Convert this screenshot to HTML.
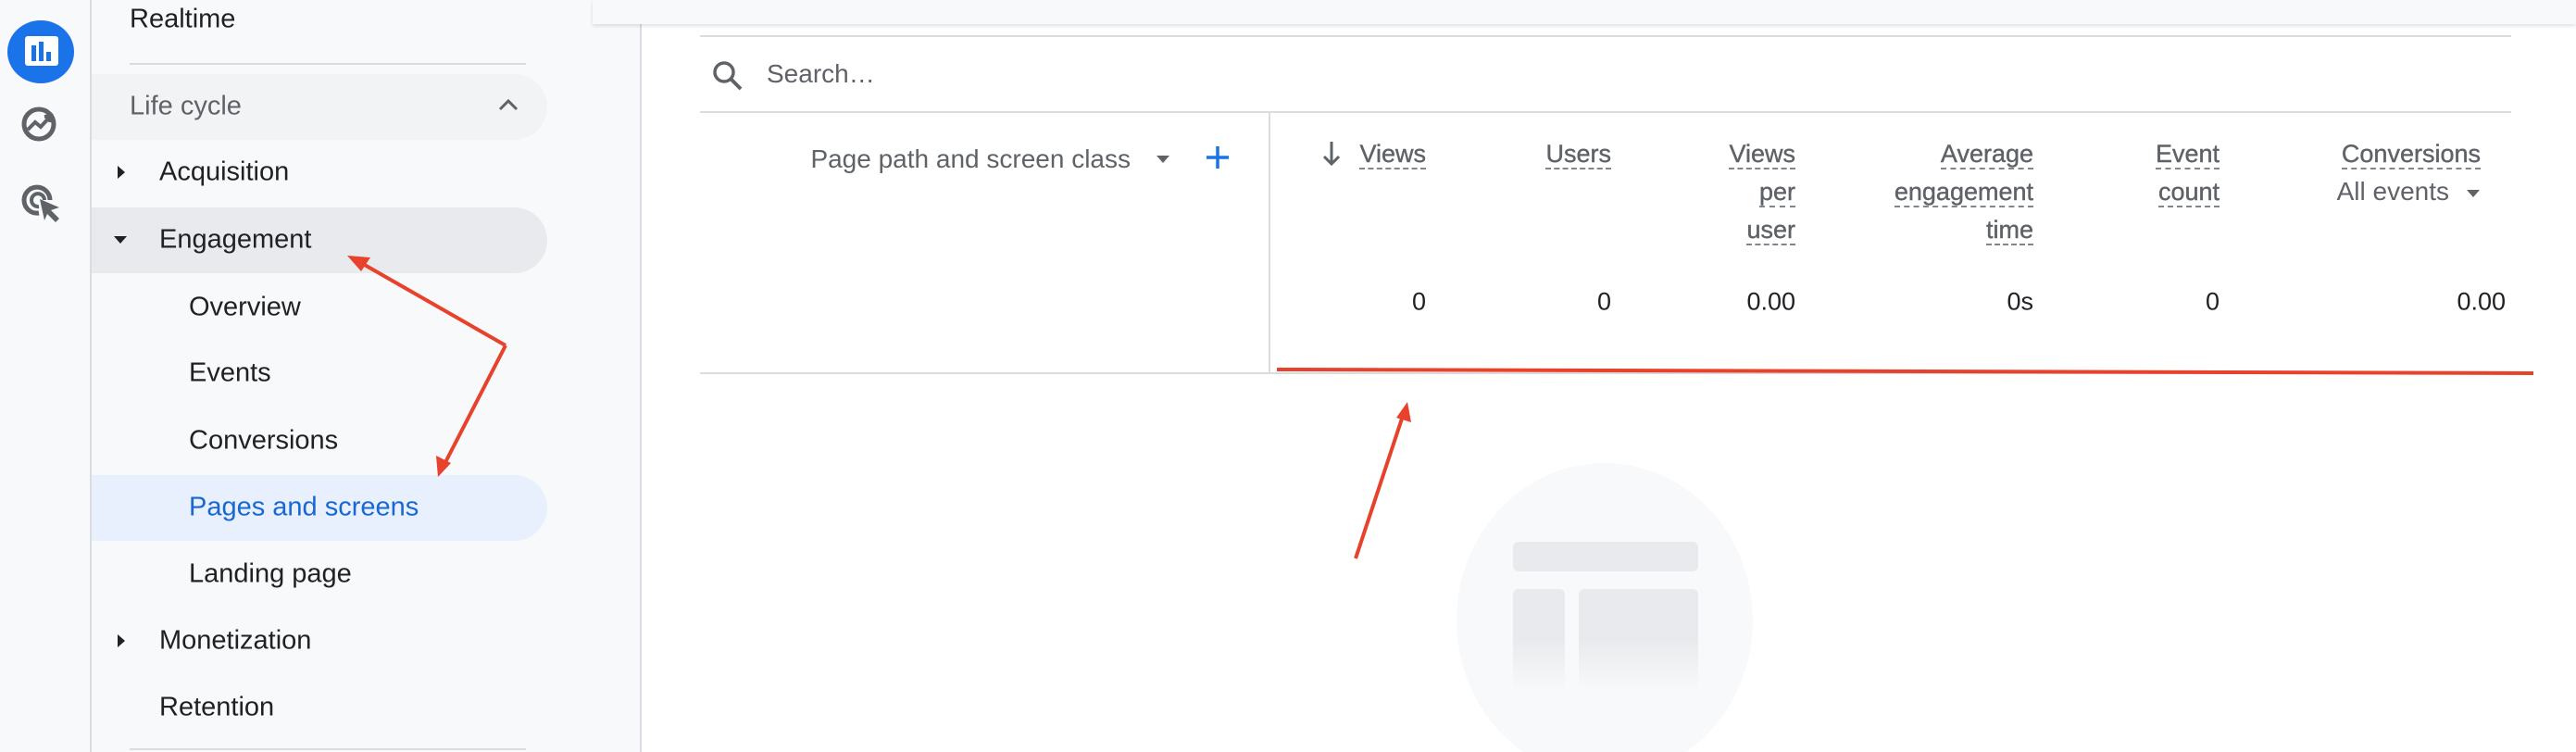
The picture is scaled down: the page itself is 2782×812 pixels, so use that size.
<!DOCTYPE html>
<html style="width:2782px;height:812px;overflow:hidden"><head><meta charset="utf-8"><style>
*{margin:0;padding:0;box-sizing:border-box}
body{width:2782px;height:812px;overflow:hidden;background:#fff;font-family:"Liberation Sans",Arial,sans-serif;position:relative}
.a{position:absolute;white-space:nowrap}
#rail{left:0;top:0;width:99px;height:812px;background:#f8f9fa;border-right:2px solid #dadce0}
#nav{left:99px;top:0;width:594px;height:812px;background:#f8f9fa;border-right:2px solid #dadce0}
.pill{position:absolute;left:99px;width:492px;height:71px;border-radius:0 36px 36px 0}
.nt{font-size:29px;color:#202124;transform:translateY(-50%)}
.h{font-size:27px;color:#5f6368;font-weight:normal;text-align:right;line-height:41px;-webkit-text-stroke:0.4px #5f6368}
.h span{border-bottom:2px dashed #80868b;padding-bottom:0}
.v{font-size:27px;color:#202124;transform:translateY(-50%)}
</style></head><body>
<div class="a" id="rail"></div>
<div class="a" style="left:8px;top:22px;width:72px;height:68px;border-radius:50%;background:#1a73e8"></div>
<div class="a" style="left:27px;top:39px;width:36px;height:32px;background:#fff;border-radius:3px"></div>
<div class="a" style="left:34px;top:49px;width:5px;height:17px;background:#1a73e8"></div>
<div class="a" style="left:42px;top:45px;width:5px;height:21px;background:#1a73e8"></div>
<div class="a" style="left:50px;top:56px;width:5px;height:10px;background:#1a73e8"></div>
<svg class="a" style="left:22px;top:114px" width="44" height="40" viewBox="0 0 44 40"><circle cx="20" cy="20" r="16" fill="none" stroke="#5f6368" stroke-width="5"/><path d="M8 26 L16 18 L22 23 L31 13" fill="none" stroke="#5f6368" stroke-width="4"/><path d="M26 12 L33 11 L32 18" fill="none" stroke="#5f6368" stroke-width="4"/></svg>
<svg class="a" style="left:22px;top:196px" width="46" height="46" viewBox="0 0 46 46"><path d="M32 20 A14 14 0 1 0 20 34" fill="none" stroke="#5f6368" stroke-width="5"/><path d="M26 20 A7 7 0 1 0 20 27" fill="none" stroke="#5f6368" stroke-width="4"/><path d="M21 19 L42 28 L33 31 L42 40 L38 44 L29 35 L26 42 Z" fill="#5f6368"/></svg>

<div class="a" id="nav"></div>
<div class="a" style="left:640px;top:0;width:2142px;height:26px;background:#f8f9fa;box-shadow:0 2px 4px rgba(0,0,0,.12)"></div>
<div class="a nt" style="left:140px;top:21px">Realtime</div>
<div class="a" style="left:140px;top:68px;width:428px;height:2px;background:#dadce0"></div>
<div class="pill" style="top:80px;background:#f1f3f4"></div>
<div class="a nt" style="left:140px;top:115px;color:#5f6368">Life cycle</div>
<svg class="a" style="left:537px;top:105px" width="24" height="16"><path d="M3 13 L12 4 L21 13" fill="none" stroke="#5f6368" stroke-width="3"/></svg>
<svg class="a" style="left:126px;top:178px" width="10" height="16"><path d="M1 1 L9 8 L1 15Z" fill="#202124"/></svg>
<div class="a nt" style="left:172px;top:186px">Acquisition</div>
<div class="pill" style="top:224px;background:#e8eaed"></div>
<svg class="a" style="left:122px;top:254px" width="16" height="10"><path d="M1 1 L15 1 L8 9Z" fill="#202124"/></svg>
<div class="a nt" style="left:172px;top:259px">Engagement</div>
<div class="a nt" style="left:204px;top:332px">Overview</div>
<div class="a nt" style="left:204px;top:403px">Events</div>
<div class="a nt" style="left:204px;top:476px">Conversions</div>
<div class="pill" style="top:513px;background:#e8f0fe"></div>
<div class="a nt" style="left:204px;top:548px;color:#1967d2">Pages and screens</div>
<div class="a nt" style="left:204px;top:620px">Landing page</div>
<svg class="a" style="left:126px;top:684px" width="10" height="16"><path d="M1 1 L9 8 L1 15Z" fill="#202124"/></svg>
<div class="a nt" style="left:172px;top:692px">Monetization</div>
<div class="a nt" style="left:172px;top:764px">Retention</div>
<div class="a" style="left:140px;top:808px;width:428px;height:2px;background:#dadce0"></div>

<!-- table -->
<div class="a" style="left:756px;top:38px;width:1956px;height:2px;background:#dadce0"></div>
<svg class="a" style="left:768px;top:64px" width="36" height="36" viewBox="0 0 36 36"><circle cx="14" cy="14" r="10" fill="none" stroke="#5f6368" stroke-width="3.5"/><path d="M21 21 L32 32" stroke="#5f6368" stroke-width="4"/></svg>
<div class="a" style="left:828px;top:64px;font-size:28px;color:#5f6368">Search…</div>
<div class="a" style="left:756px;top:120px;width:1956px;height:2px;background:#dadce0"></div>
<div class="a" style="left:1370px;top:121px;width:2px;height:282px;background:#dadce0"></div>
<div class="a" style="left:756px;top:402px;width:1956px;height:2px;background:#dadce0"></div>
<div class="a" style="right:1561px;top:156px;font-size:28px;color:#5f6368">Page path and screen class</div>
<svg class="a" style="left:1248px;top:167px" width="16" height="10"><path d="M1 1 L15 1 L8 9Z" fill="#5f6368"/></svg>
<svg class="a" style="left:1302px;top:157px" width="26" height="26"><path d="M13 1 V25 M1 13 H25" stroke="#1a73e8" stroke-width="3.5"/></svg>

<svg class="a" style="left:1428px;top:152px" width="20" height="28"><path d="M10 1 V25 M2 17 L10 25 L18 17" fill="none" stroke="#5f6368" stroke-width="3"/></svg>
<div class="a h" style="right:1242px;top:146px"><span>Views</span></div>
<div class="a h" style="right:1042px;top:146px"><span>Users</span></div>
<div class="a h" style="right:843px;top:146px"><span>Views</span><br><span>per</span><br><span>user</span></div>
<div class="a h" style="right:586px;top:146px"><span>Average</span><br><span>engagement</span><br><span>time</span></div>
<div class="a h" style="right:385px;top:146px"><span>Event</span><br><span>count</span></div>
<div class="a h" style="right:103px;top:146px"><span>Conversions</span></div>
<div class="a" style="right:137px;top:191px;font-size:28px;color:#5f6368">All events</div>
<svg class="a" style="left:2663px;top:204px" width="16" height="10"><path d="M1 1 L15 1 L8 9Z" fill="#5f6368"/></svg>

<div class="a v" style="right:1242px;top:326px">0</div>
<div class="a v" style="right:1042px;top:326px">0</div>
<div class="a v" style="right:843px;top:326px">0.00</div>
<div class="a v" style="right:586px;top:326px">0s</div>
<div class="a v" style="right:385px;top:326px">0</div>
<div class="a v" style="right:76px;top:326px">0.00</div>

<!-- empty state -->
<div class="a" style="left:1573px;top:500px;width:320px;height:312px;overflow:hidden"><div style="width:320px;height:340px;border-radius:50%;background:#f8f9fa"></div></div>
<div class="a" style="left:1634px;top:585px;width:200px;height:32px;border-radius:6px;background:#e8eaed"></div>
<div class="a" style="left:1634px;top:636px;width:56px;height:110px;border-radius:6px;background:linear-gradient(#e8eaed 50%,#f8f9fa)"></div>
<div class="a" style="left:1705px;top:636px;width:129px;height:110px;border-radius:6px;background:linear-gradient(#e8eaed 50%,#f8f9fa)"></div>

<!-- red annotations -->
<svg class="a" style="left:0;top:0" width="2782" height="812">
<g stroke="#e8412c" stroke-width="4" fill="none">
<path d="M1379 399 L2736 403"/>
<path d="M546 373 L385 281"/>
<path d="M546 373 L478 505"/>
<path d="M1464 603 L1516 446"/>
</g>
<g fill="#e8412c">
<path d="M375 276 L400 278 L390 293Z"/>
<path d="M473 515 L471 492 L487 500Z"/>
<path d="M1520 434 L1524 456 L1508 451Z"/>
</g>
</svg>
</body></html>
